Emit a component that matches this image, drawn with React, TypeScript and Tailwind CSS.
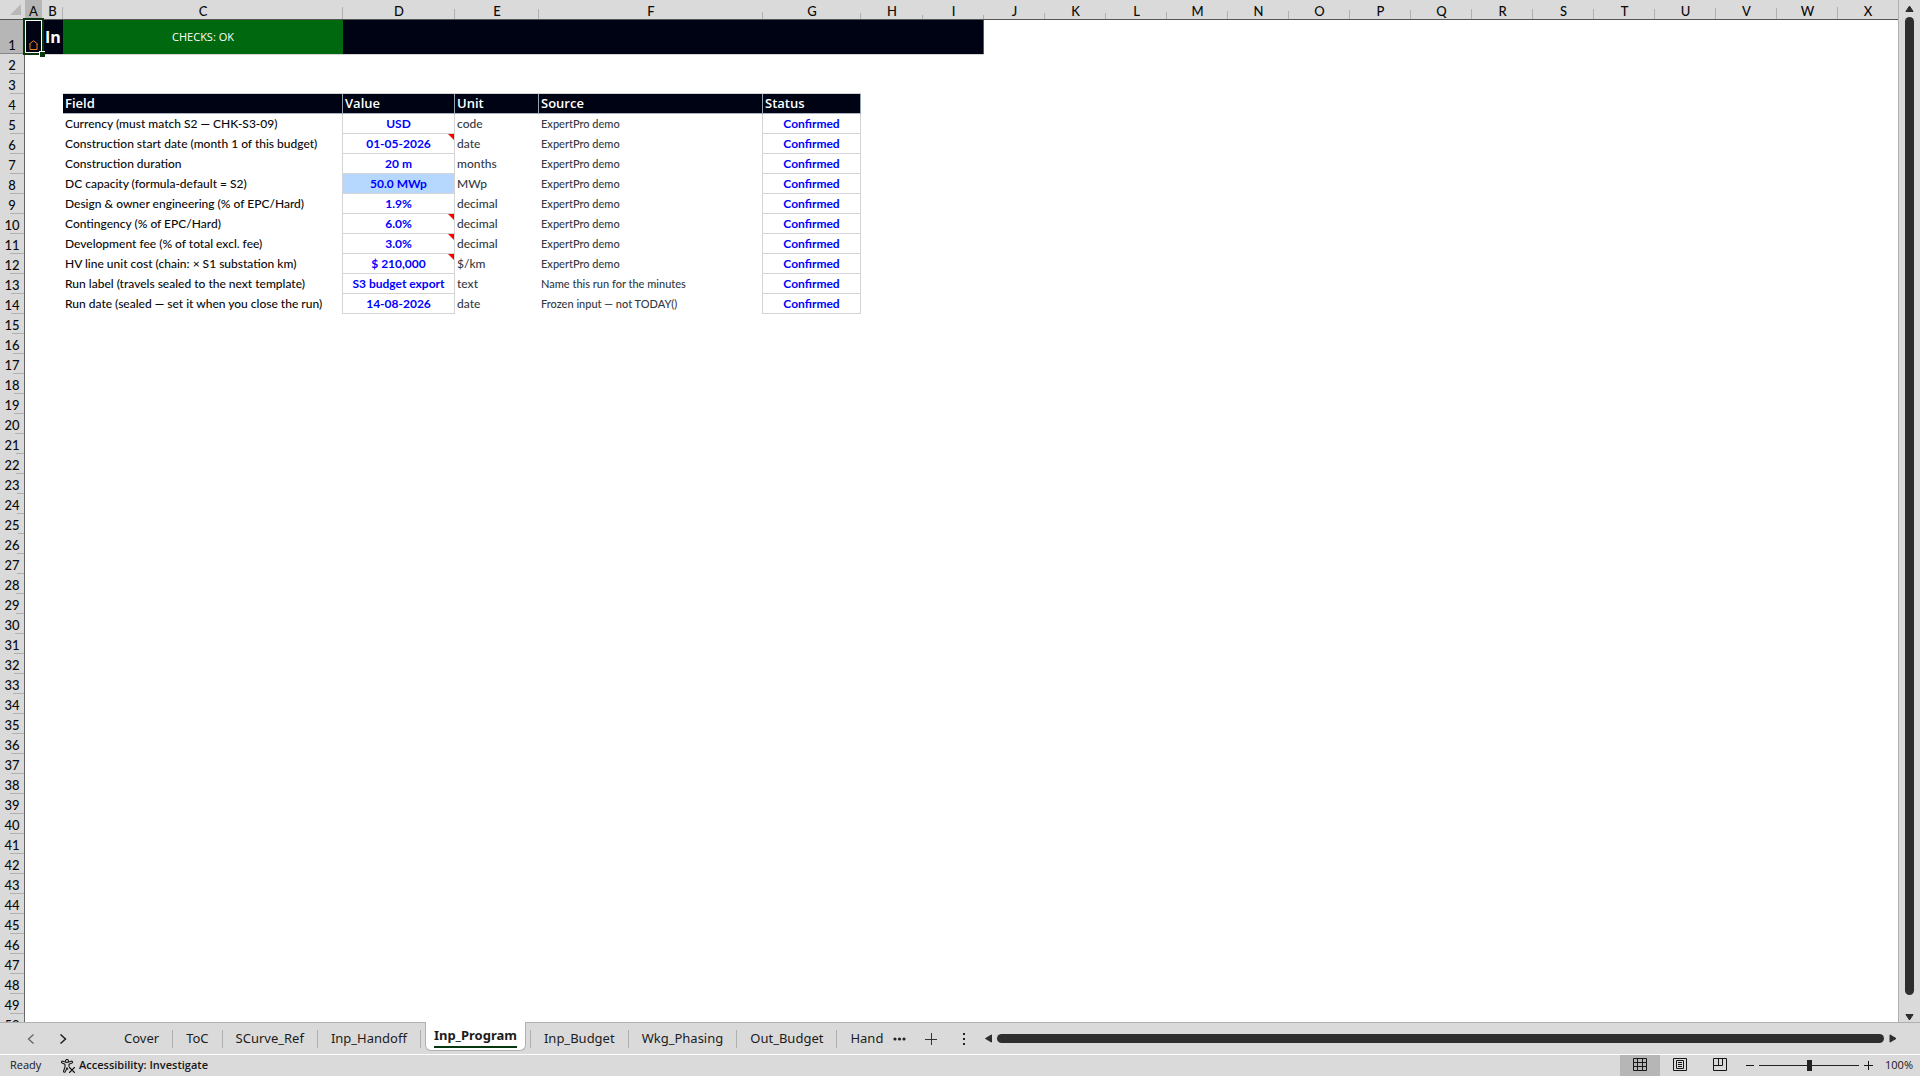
import type { ReactNode } from "react";

type Column = { id: string; width: string; tick: string };

const columns: Column[] = [
  { id: "A", width: "w-[17px]", tick: "h-0" },
  { id: "B", width: "w-[21px]", tick: "h-3" },
  { id: "C", width: "w-[280px]", tick: "h-3" },
  { id: "D", width: "w-28", tick: "h-2.5" },
  { id: "E", width: "w-[84px]", tick: "h-2.5" },
  { id: "F", width: "w-56", tick: "h-[7px]" },
  { id: "G", width: "w-[98px]", tick: "h-1.5" },
  { id: "H", width: "w-[62px]", tick: "h-1" },
  { id: "I", width: "w-[61px]", tick: "h-1" },
  { id: "J", width: "w-[61px]", tick: "h-1.5" },
  { id: "K", width: "w-[61px]", tick: "h-1.5" },
  { id: "L", width: "w-[61px]", tick: "h-[7px]" },
  { id: "M", width: "w-[61px]", tick: "h-2" },
  { id: "N", width: "w-[61px]", tick: "h-2" },
  { id: "O", width: "w-[61px]", tick: "h-[9px]" },
  { id: "P", width: "w-[61px]", tick: "h-[9px]" },
  { id: "Q", width: "w-[61px]", tick: "h-2.5" },
  { id: "R", width: "w-[61px]", tick: "h-2.5" },
  { id: "S", width: "w-[61px]", tick: "h-2.5" },
  { id: "T", width: "w-[61px]", tick: "h-2.5" },
  { id: "U", width: "w-[61px]", tick: "h-[11px]" },
  { id: "V", width: "w-[61px]", tick: "h-[11px]" },
  { id: "W", width: "w-[61px]", tick: "h-3" },
  { id: "X", width: "", tick: "h-0" },
];

type Entry = { field: string; value: string; unit: string; source: string; note?: boolean; linked?: boolean };

const entries: Entry[] = [
  { field: "Currency (must match S2 — CHK-S3-09)", value: "USD", unit: "code", source: "ExpertPro demo" },
  { field: "Construction start date (month 1 of this budget)", value: "01-05-2026", unit: "date", source: "ExpertPro demo", note: true },
  { field: "Construction duration", value: "20 m", unit: "months", source: "ExpertPro demo" },
  { field: "DC capacity (formula-default = S2)", value: "50.0 MWp", unit: "MWp", source: "ExpertPro demo", linked: true },
  { field: "Design & owner engineering (% of EPC/Hard)", value: "1.9%", unit: "decimal", source: "ExpertPro demo" },
  { field: "Contingency (% of EPC/Hard)", value: "6.0%", unit: "decimal", source: "ExpertPro demo", note: true },
  { field: "Development fee (% of total excl. fee)", value: "3.0%", unit: "decimal", source: "ExpertPro demo", note: true },
  { field: "HV line unit cost (chain: × S1 substation km)", value: "$ 210,000", unit: "$/km", source: "ExpertPro demo", note: true },
  { field: "Run label (travels sealed to the next template)", value: "S3 budget export", unit: "text", source: "Name this run for the minutes" },
  { field: "Run date (sealed — set it when you close the run)", value: "14-08-2026", unit: "date", source: "Frozen input — not TODAY()" },
];

const emptyRows = Array.from({ length: 36 }, (_, i) => i + 15);

function RowHeader({ n }: { n: number }) {
  const tick = 6 + Math.min(8, Math.round(Math.abs(n - 25) * 0.6));
  return (
    <th scope="row" className="relative h-5 border-r border-[#666] bg-[#dadada] p-0 pt-px text-center text-[13px] leading-4 font-medium">
      {n}
      <span className="absolute right-0 bottom-0 h-px bg-[#b0b0b0]" style={{ width: tick }} />
    </th>
  );
}

function TitleRow() {
  return (
    <tr className="h-[34px]">
      <th scope="row" className="border-r border-b border-[#888] bg-[#b6b6b6] p-0 text-center align-bottom text-[13px] leading-4 font-medium">
        1
      </th>
      <td className="relative bg-[#000314] p-0">
        <a href="#toc" aria-label="Home" className="flex h-[34px] items-end justify-center pb-1">
          <svg viewBox="0 0 11 10" className="h-2.5 w-[11px]" fill="none" stroke="#e8801a">
            <path d="M1 4.5 5.5.7 10 4.5M2 4v5.5h7V4" />
          </svg>
        </a>
        <div className="pointer-events-none absolute -inset-x-0.5 -top-0.5 -bottom-px z-10 border-2 border-[#07380f]">
          <div className="h-full border border-white" />
        </div>
        <div className="absolute -right-[3px] -bottom-[3px] z-20 size-1.5 border-t border-l border-white bg-[#07380f]" />
      </td>
      <td className="bg-[#000314] p-0">
        <div className="overflow-hidden pl-[3px] font-['Open_Sans',sans-serif] text-base leading-8 font-bold text-white">In</div>
      </td>
      <td className="bg-[#00680e] p-0 text-center font-['Open_Sans',sans-serif] text-[11px] text-white">CHECKS: OK</td>
      <td colSpan={6} className="border-r border-[#3f6068] bg-[#000314] p-0" />
      <td colSpan={15} className="p-0" />
    </tr>
  );
}

function HeadCell({ children }: { children: ReactNode }) {
  return (
    <th
      scope="col"
      className="border-r border-b border-r-[#8fa3b0] border-b-[#aab4c4] bg-[#000314] p-0 pb-px pl-0.5 text-left font-['Open_Sans',sans-serif] text-[13px] leading-4 font-semibold text-white"
    >
      {children}
    </th>
  );
}

function Grid() {
  return (
    <table className="w-full table-fixed border-separate border-spacing-0 whitespace-nowrap">
      <colgroup>
        <col className="w-[25px]" />
        {columns.map((c) => (
          <col key={c.id} className={c.width} />
        ))}
      </colgroup>
      <thead>
        <tr className="h-5">
          <td className="border-b border-[#555] bg-[#dadada] p-0">
            <svg viewBox="0 0 11 11" className="ml-2.5 size-[11px]" fill="#b8b8b8">
              <path d="M11 0V11H0Z" />
            </svg>
          </td>
          {columns.map((c) => (
            <th
              key={c.id}
              scope="col"
              className={
                "relative h-5 border-b border-[#555] p-0 pt-0.5 text-[13px] leading-4 font-medium " +
                (c.id === "A" ? "bg-[#b6b6b6]" : "bg-[#dadada]")
              }
            >
              {c.id}
              <span className={"absolute right-0 bottom-0 w-px bg-[#b0b0b0] " + c.tick} />
            </th>
          ))}
        </tr>
      </thead>
      <tbody>
        <TitleRow />
        <tr className="h-5">
          <RowHeader n={2} />
          <td colSpan={9} className="border-t border-[#d4d4d4] p-0" />
          <td colSpan={15} className="p-0" />
        </tr>
        <tr className="h-5">
          <RowHeader n={3} />
          <td colSpan={2} className="p-0" />
          <td colSpan={5} className="border-b border-[#d4d4d4] p-0" />
          <td colSpan={17} className="p-0" />
        </tr>
        <tr className="h-5">
          <RowHeader n={4} />
          <td colSpan={2} className="p-0" />
          <HeadCell>Field</HeadCell>
          <HeadCell>Value</HeadCell>
          <HeadCell>Unit</HeadCell>
          <HeadCell>Source</HeadCell>
          <HeadCell>Status</HeadCell>
          <td colSpan={17} className="p-0" />
        </tr>
        {entries.map((e, i) => (
          <tr key={e.field} className="h-5">
            <RowHeader n={i + 5} />
            <td colSpan={2} className="p-0" />
            <td className="border-r border-[#d4d4d4] p-0 pl-0.5 text-xs font-medium">{e.field}</td>
            <td
              className={
                "relative border-r border-b border-[#d4d4d4] p-0 text-center text-xs font-bold text-[#0000ff] " +
                (e.linked ? "bg-[#b6d8ff]" : "bg-white")
              }
            >
              {e.value}
              {e.note && (
                <svg viewBox="0 0 6 6" className="absolute top-0 right-0 size-1.5" fill="#ff0000">
                  <path d="M0 0H6V6Z" />
                </svg>
              )}
            </td>
            <td className="p-0 pl-0.5 text-xs font-medium text-[#333a44]">{e.unit}</td>
            <td className="border-r border-[#d4d4d4] p-0 pl-0.5 text-[11px] leading-4 font-medium text-[#333a44]">{e.source}</td>
            <td className="border-r border-b border-[#d4d4d4] p-0 text-center text-xs font-bold text-[#0000ff]">Confirmed</td>
            <td colSpan={17} className="p-0" />
          </tr>
        ))}
        {emptyRows.map((n) => (
          <tr key={n} className="h-5">
            <RowHeader n={n} />
            <td colSpan={24} className="p-0" />
          </tr>
        ))}
      </tbody>
    </table>
  );
}

function Arrow({ d, label }: { d: string; label: string }) {
  return (
    <button type="button" aria-label={label} className="shrink-0">
      <svg viewBox="0 0 9 9" className="size-[9px]" fill="#2e2e2e" stroke="#2e2e2e" strokeLinejoin="round">
        <path d={d} />
      </svg>
    </button>
  );
}

function Tab({ name }: { name: string }) {
  return (
    <button type="button" className="flex h-[18px] items-center border-r border-[#b0b0b0] px-[13px]">
      {name}
    </button>
  );
}

function TabBar() {
  return (
    <div className="flex h-[33px] shrink-0 items-start border-b border-white bg-[#dadada] font-['Noto_Sans',sans-serif] text-[13px] text-[#1c1c1c]">
      <div className="flex h-8 w-full items-center border-t border-[#b0b0b0]">
        <div className="flex w-[111px] shrink-0 items-center gap-[22px] pl-[26px]">
          <button type="button" aria-label="Previous sheets">
            <svg viewBox="0 0 10 10" className="size-2.5" fill="none" stroke="#666" strokeWidth="1.3">
              <path d="M7.5.5 2.5 5l5 4.5" />
            </svg>
          </button>
          <button type="button" aria-label="Next sheets">
            <svg viewBox="0 0 10 10" className="size-2.5" fill="none" stroke="#222" strokeWidth="1.5">
              <path d="M2.5.5l5 4.5-5 4.5" />
            </svg>
          </button>
        </div>
        <Tab name="Cover" />
        <Tab name="ToC" />
        <Tab name="SCurve_Ref" />
        <Tab name="Inp_Handoff" />
        <button type="button" aria-current="page" className="mx-1 -mt-px h-[29px] self-start rounded-b-md border-r border-b border-l border-[#b0b0b0] bg-white px-2 font-bold">
          <span className="mb-0.5 block border-b-2 border-[#07380f] pt-0.5 leading-[22px]">Inp_Program</span>
        </button>
        <span className="h-[18px] w-px bg-[#b0b0b0]" />
        <Tab name="Inp_Budget" />
        <Tab name="Wkg_Phasing" />
        <Tab name="Out_Budget" />
        <button type="button" className="pl-[13px]">Hand</button>
        <button type="button" aria-label="More sheets" className="ml-2.5">
          <svg viewBox="0 0 13 4" className="h-1 w-[13px]" fill="#222">
            <circle cx="2" cy="2" r="1.6" />
            <circle cx="6.5" cy="2" r="1.6" />
            <circle cx="11" cy="2" r="1.6" />
          </svg>
        </button>
        <button type="button" aria-label="New sheet" className="ml-[19px]">
          <svg viewBox="0 0 12 12" className="size-3" stroke="#333">
            <path d="M6.5 0V12M0 6.5H12" />
          </svg>
        </button>
        <svg viewBox="0 0 3 12" className="ml-[26px] h-3 w-[3px]" fill="#222">
          <path d="M0 0h2v2H0zM0 5h2v2H0zM0 10h2v2H0z" />
        </svg>
        <div className="ml-[18px] flex flex-1 items-center gap-1 pr-[23px]">
          <Arrow label="Scroll left" d="M7.500 .9V8.100L1.500 4.500Z" />
          <div className="h-[9px] flex-1 rounded-full bg-[#2e2e2e]" />
          <Arrow label="Scroll right" d="M2 .9V8.100L8 4.500Z" />
        </div>
      </div>
    </div>
  );
}

function ViewButton({ label, active, children }: { label: string; active?: boolean; children: ReactNode }) {
  return (
    <button type="button" aria-label={label} className={"flex h-full w-10 items-center justify-center " + (active ? "bg-[#b6b6b6]" : "")}>
      <svg viewBox="0 0 14 13" className="mb-0.5 h-[13px] w-3.5" fill="none" stroke="#161616">
        {children}
      </svg>
    </button>
  );
}

function StatusBar() {
  return (
    <div className="flex h-[21px] shrink-0 items-center bg-[#dadada] font-['Open_Sans',sans-serif] text-[11px] text-[#161616]">
      <span className="w-[61px] pl-2.5 font-medium">Ready</span>
      <button type="button" className="flex items-center gap-1 font-semibold">
        <svg viewBox="0 0 14 14" className="size-3.5" fill="none" stroke="#161616" strokeWidth="1.1" strokeLinecap="round" strokeLinejoin="round">
          <circle cx="6" cy="2" r="1.5" />
          <path d="M4.500 3 1.800 2.200C.6 2-.1 3.500 1.200 4.100L4 5.300V8L2.600 12c-.3 1.300 1.300 1.800 1.800.6L6 8.800l.8 1.500M7.500 3l2.700-.8c1.300-.2 1.900 1.300.7 1.900L8 5.300v2.200M8.500 8.500l5 5M13.500 8.500l-5 5" />
        </svg>
        Accessibility: Investigate
      </button>
      <div className="ml-auto flex h-full items-center">
        <ViewButton label="Normal view" active>
          <path d="M.5.5h13v12H.5zM.5 4.500h13M.5 8.500h13M4.500.5v12M9.500.5v12" />
        </ViewButton>
        <ViewButton label="Page layout view">
          <path d="M.5.5h13v12H.5zM3.500 2.500h7v8h-7zM5 4.500h4M5 6.500h4M5 8.500h4" />
        </ViewButton>
        <ViewButton label="Page break view">
          <path d="M.5.5h13v12H.5zM.5 7.500h9v-7M5.500.5v7" />
        </ViewButton>
        <button type="button" aria-label="Zoom out" className="ml-1.5">
          <svg viewBox="0 0 8 9" className="h-[9px] w-2" stroke="#161616">
            <path d="M0 4.500H8" />
          </svg>
        </button>
        <input
          type="range"
          aria-label="Zoom"
          min={10}
          max={190}
          defaultValue={100}
          className="mx-[5px] h-px w-[100px] appearance-none bg-[#222] [&::-webkit-slider-thumb]:h-[11px] [&::-webkit-slider-thumb]:w-[5px] [&::-webkit-slider-thumb]:appearance-none [&::-webkit-slider-thumb]:bg-[#222]"
        />
        <button type="button" aria-label="Zoom in">
          <svg viewBox="0 0 9 9" className="size-[9px]" stroke="#161616">
            <path d="M0 4.500H9M4.500 0V9" />
          </svg>
        </button>
        <button type="button" className="ml-3 pr-[7px]">100%</button>
      </div>
    </div>
  );
}

export default function App() {
  return (
    <div className="flex h-screen flex-col overflow-hidden bg-white font-[Lato,sans-serif] text-[#0a0a0a]">
      <div className="flex min-h-0 flex-1">
        <div className="min-w-0 flex-1 overflow-hidden border-r border-[#b0b0b0]">
          <Grid />
        </div>
        <div className="flex w-[21px] shrink-0 flex-col items-center gap-[18px] bg-[#dadada] pt-1">
          <div className="flex flex-1 flex-col items-center gap-1">
            <Arrow label="Scroll up" d="M.9 7.500H8.100L4.500 2Z" />
            <div className="w-[9px] flex-1 rounded-full bg-[#2e2e2e]" />
          </div>
          <Arrow label="Scroll down" d="M.9 1.500H8.100L4.500 7Z" />
        </div>
      </div>
      <TabBar />
      <StatusBar />
    </div>
  );
}
